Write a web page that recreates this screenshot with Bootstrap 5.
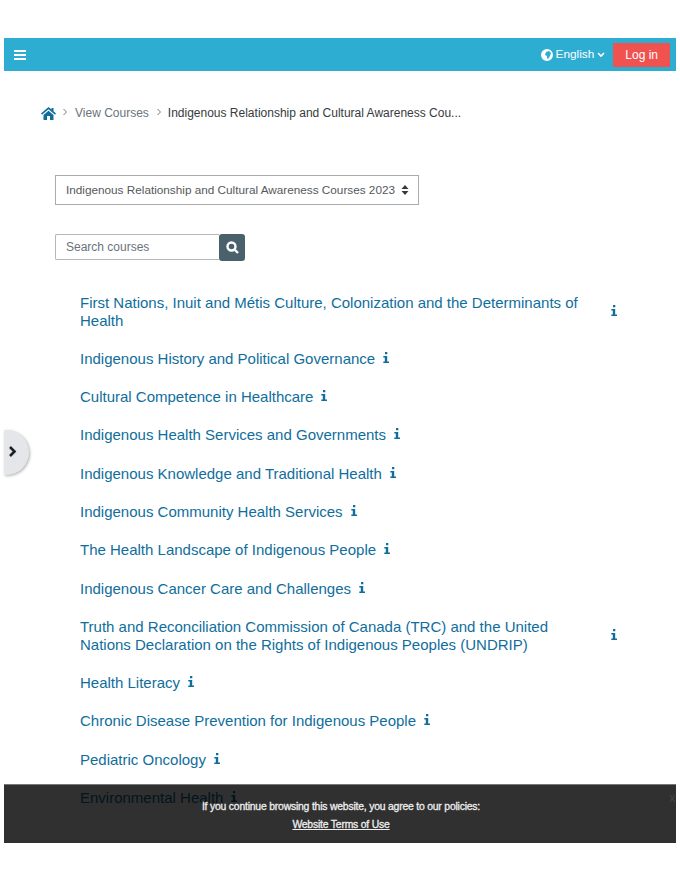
<!doctype html>
<html lang="en">
<head>
  <meta charset="utf-8">
  <meta name="viewport" content="width=device-width, initial-scale=1">
  <title>View Courses</title>
  <link href="https://cdn.jsdelivr.net/npm/bootstrap@5.3.5/dist/css/bootstrap.min.css" rel="stylesheet">
  <style>
    html, body { height: 880px; overflow: hidden; }
    body { font-family: "Liberation Sans", Arial, sans-serif; background: #fff; color: #373a3c; }
    .page-frame { position: relative; height: 880px; padding: 38px 4px 0; overflow: hidden; }
    .top-bar { height: 33px; background: #2eadd3; padding: 0 6px 0 10px; }
    .bar-icon { width: 12px; height: 12px; fill: #fff; }
    .lang-link { color: #fff; font-size: 11.8px; text-decoration: none; margin-right: 8px; gap: 3px; }
    .login-btn { background: #f0524f; color: #fff; font-size: 12px; border: 0; border-radius: 0; padding: 0 12px; height: 24px; line-height: 24px; }
    .crumbs { margin: 33px 0 0 37px; height: 18px; font-size: 12px; color: #373a3c; }
    .crumbs a { color: #6a737b; text-decoration: none; }
    .crumb-sep { flex: none; margin: -3px 7px 0; width: 6px; height: 8px; fill: none; stroke: #7a7a7a; stroke-width: 1; }
    .crumbs a + .crumb-sep { margin-right: 6px; }
    .home-icon { flex: none; width: 15px; height: 13px; fill: #0f6e9c; margin-right: -1px; }
    .course-select { margin: 53px 0 0 51px; width: 364px; height: 30px; border: 1px solid #a9abad; padding: 0 9px 0 10px; font-size: 11.76px; color: #55595c; white-space: nowrap; }
    .updown { flex: none; width: 8px; height: 10px; fill: #373a3c; }
    .search-row { margin: 29px 0 0 51px; }
    .search-box { width: 164px; height: 26px; border: 1px solid #b5b7b9; border-right: 0; border-radius: 2px 0 0 2px; padding: 0 10px; font-size: 12px; color: #6a737b; line-height: 24px; }
    .search-btn { width: 26px; height: 27px; background: #4a616c; border: 0; border-radius: 3px; padding: 0; }
    .search-btn svg { width: 13px; height: 13px; fill: none; stroke: #fff; stroke-width: 2.4; }
    .course-list { margin: 32.5px 0 0 76px; width: 536.5px; font-size: 15px; line-height: 18px; }
    .course-list li { margin-bottom: 20.3px; }
    .course-list a { color: #0f6e9c; text-decoration: none; padding-right: 1px; }
    .info-icon { flex: none; width: 6px; height: 11px; margin: -3px 0 0 7px; fill: #0f6e9c; }
    .side-toggle { position: absolute; left: 4px; top: 430px; width: 25px; height: 45px; background: #e4e6e9; border-radius: 0 23px 23px 0; box-shadow: 1px 1px 3px rgba(0,0,0,.3); }
    .side-toggle svg { width: 9px; height: 11px; fill: none; stroke: #1d2125; stroke-width: 2.6; margin: -3px 0 0 -8px; }
    .cookie-bar { position: absolute; left: 4px; right: 4px; top: 784px; height: 59px; background: rgba(0,0,0,.81); border-top: 1px solid #777; color: #eee; font-size: 10.4px; letter-spacing: -.2px; -webkit-text-stroke: .3px #eee; text-align: center; padding: 15px 0 0 2px; }
    .cookie-bar p { margin: 0 0 5px; line-height: 13px; }
    .cookie-bar a { color: #eee; }
    .cookie-close { position: absolute; right: 1px; top: 4px; color: #444; font-size: 12px; -webkit-text-stroke: 0; }
  </style>
</head>
<body>
  <div class="page-frame">
    <nav class="top-bar d-flex align-items-center justify-content-between">
      <svg class="bar-icon" viewBox="0 0 12 12"><path d="M0 1h12v2H0zM0 5h12v2H0zM0 9h12v2H0z"/></svg>
      <div class="d-flex align-items-center">
        <a class="lang-link d-flex align-items-center" href="#">
          <svg class="bar-icon" viewBox="0 0 12 12"><path fill-rule="evenodd" d="M6 0a6 6 0 1 0 0 12A6 6 0 0 0 6 0zM5 3l3-1 2 2-1 3-2 3-1-1 0-2-2-1z"/></svg>
          <span>English</span>
          <svg width="8" height="6" viewBox="0 0 8 6"><path d="M1 1l3 3 3-3" fill="none" stroke="#fff" stroke-width="1.6"/></svg>
        </a>
        <button class="login-btn" type="button">Log in</button>
      </div>
    </nav>

    <div class="crumbs d-flex align-items-center">
      <svg class="home-icon" viewBox="0 0 15 13"><path d="M7.5 0 0 6.500 1 7.700 7.500 2.300 14 7.700 15 6.500 12.500 4.300V1h-2v1.600zM2.500 8v5h3.500V9h3v4h3.500V8l-5-4.200z"/></svg>
      <svg class="crumb-sep" viewBox="0 0 6 8"><path d="M1.500 1l3 3-3 3"/></svg>
      <a href="#">View Courses</a>
      <svg class="crumb-sep" viewBox="0 0 6 8"><path d="M1.500 1l3 3-3 3"/></svg>
      <span>Indigenous Relationship and Cultural Awareness Cou...</span>
    </div>

    <div class="course-select d-flex align-items-center justify-content-between">
      <span>Indigenous Relationship and Cultural Awareness Courses 2023</span>
      <svg class="updown" viewBox="0 0 8 10"><path d="M4 0l3.500 4H.5zM4 10 .5 6h7z"/></svg>
    </div>

    <div class="search-row d-flex align-items-start">
      <div class="search-box">Search courses</div>
      <button class="search-btn d-flex align-items-center justify-content-center" type="button">
        <svg viewBox="0 0 13 13"><circle cx="5.500" cy="5.500" r="4"/><path d="M8.500 8.500l3.500 3.500"/></svg>
      </button>
    </div>

    <ul class="course-list list-unstyled" id="courses"></ul>

    <div class="side-toggle d-flex align-items-center justify-content-center">
      <svg viewBox="0 0 9 11"><path d="M2 1l4.500 4.500L2 10"/></svg>
    </div>

    <div class="cookie-bar">
      <p>If you continue browsing this website, you agree to our policies:</p>
      <p><a href="#">Website Terms of Use</a></p>
      <span class="cookie-close">x</span>
    </div>
  </div>

  <script>
    const courses = [
      'First Nations, Inuit and Métis Culture, Colonization and the Determinants of Health',
      'Indigenous History and Political Governance',
      'Cultural Competence in Healthcare',
      'Indigenous Health Services and Governments',
      'Indigenous Knowledge and Traditional Health',
      'Indigenous Community Health Services',
      'The Health Landscape of Indigenous People',
      'Indigenous Cancer Care and Challenges',
      'Truth and Reconciliation Commission of Canada (TRC) and the United Nations Declaration on the Rights of Indigenous Peoples (UNDRIP)',
      'Health Literacy',
      'Chronic Disease Prevention for Indigenous People',
      'Pediatric Oncology',
      'Environmental Health'
    ];
    document.getElementById('courses').innerHTML = courses.map(name => `
      <li class="d-flex align-items-center">
        <a href="#">${name}</a>
        <svg class="info-icon" viewBox="0 0 6 11"><path d="M2 0h2.300v2.300H2zM.3 4h3.900v5.600H6V11H.3V9.600h1.500V5.400H.3z"/></svg>
      </li>`).join('');
  </script>
  <script src="https://cdn.jsdelivr.net/npm/bootstrap@5.3.5/dist/js/bootstrap.bundle.min.js"></script>
</body>
</html>
